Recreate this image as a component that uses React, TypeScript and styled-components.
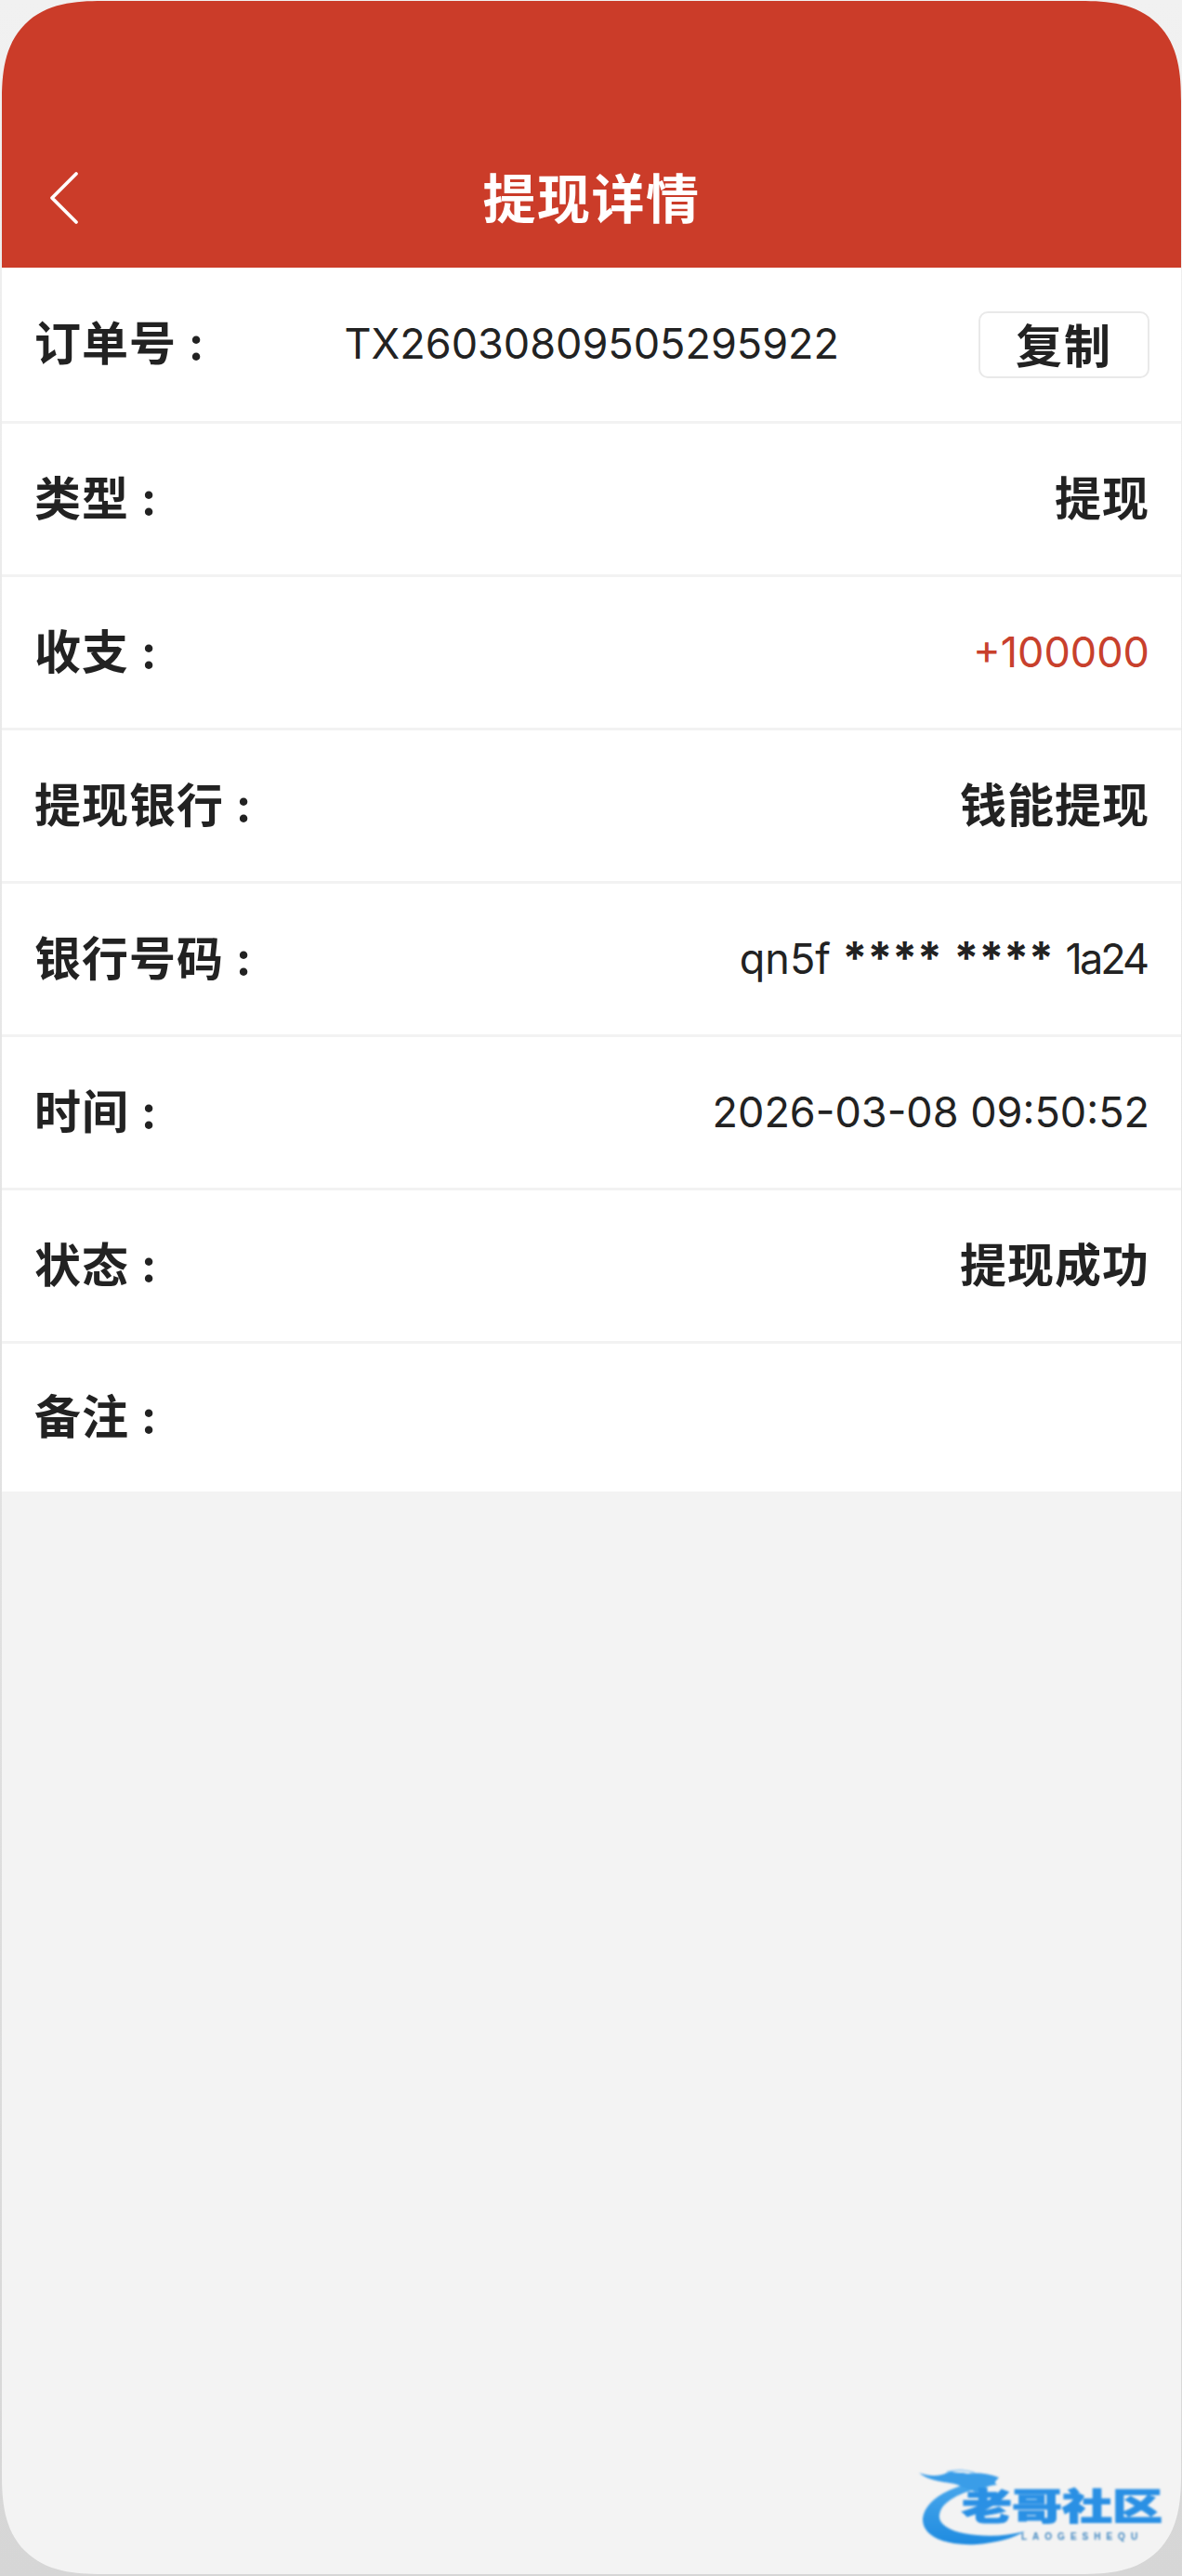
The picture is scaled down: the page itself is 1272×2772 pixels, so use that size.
import React from "react";
import styled, { createGlobalStyle } from "styled-components";

type Tone = "plain" | "strong" | "accent";
type Row = {
  label: string;
  value?: React.ReactNode;
  tone?: Tone;
};

const App = () => {
  const rows: Row[] = [
    { label: "类型", value: "提现", tone: "strong" },
    { label: "收支", value: "+100000", tone: "accent" },
    { label: "提现银行", value: "钱能提现", tone: "strong" },
    {
      label: "银行号码",
      value: (
        <>
          qn5f <Mask>****</Mask> <Mask>****</Mask> <Tail>1a24</Tail>
        </>
      ),
    },
    { label: "时间", value: "2026-03-08 09:50:52" },
    { label: "状态", value: "提现成功", tone: "strong" },
    { label: "备注" },
  ];

  return (
    <Frame>
      <GlobalStyle />
      <Screen>
        <Header>
          <BackIcon viewBox="0 0 34 58" fill="none">
            <path
              d="M30 3 L4 29 L30 55"
              stroke="#fff"
              strokeWidth="3.8"
              strokeLinecap="round"
              strokeLinejoin="round"
            />
          </BackIcon>
          <Title>提现详情</Title>
        </Header>
        <List>
          <Item>
            <Label>订单号 :</Label>
            <Value>TX26030809505295922</Value>
            <CopyButton>复制</CopyButton>
          </Item>
          {rows.map((el, i) => (
            <Item key={i}>
              <Label>{el.label} :</Label>
              {el.value && <Value $tone={el.tone}>{el.value}</Value>}
            </Item>
          ))}
        </List>
        <Logo>
          <Dragon viewBox="0 0 262 90" fill="none">
            <defs>
              <linearGradient id="swoosh" x1="0" y1="0" x2="0" y2="1">
                <stop offset="0" stopColor="#4aa8ec" />
                <stop offset="1" stopColor="#1f8be0" />
              </linearGradient>
            </defs>
            <path
              d="M66 14 C30 20 6 36 4 54 C3 74 30 84 62 82 C84 80 100 76 114 68 C96 72 80 74 62 72 C38 70 20 62 22 50 C24 36 44 26 70 20 Z"
              fill="url(#swoosh)"
            />
            <path
              d="M0 5 C14 10 26 8 34 3 C40 6 46 4 52 6 C62 4 76 6 86 10 C82 14 80 16 84 18 C74 18 70 22 62 26 C54 22 48 22 42 18 C30 14 14 16 0 5 Z"
              fill="#3a9de8"
            />
            <path d="M30 4 C40 1 52 2 60 5" stroke="#8cc6f2" strokeWidth="1.5" />
          </Dragon>
          <LogoName>老哥社区</LogoName>
          <LogoSub>LAOGESHEQU</LogoSub>
        </Logo>
      </Screen>
    </Frame>
  );
};

export default App;

const GlobalStyle = createGlobalStyle`
  html, body {
    margin: 0;
    padding: 0;
  }
  body {
    font-family: "Inter", "Noto Sans CJK SC", sans-serif;
  }
`;

const Frame = styled.div`
  width: 1272px;
  height: 2772px;
  box-sizing: border-box;
  padding: 1px 1px 2px 2px;
  background: linear-gradient(180deg, #f1f1f1 0%, #d6d6d6 100%);
`;

const Screen = styled.div`
  position: relative;
  height: 100%;
  display: flex;
  flex-direction: column;
  overflow: hidden;
  border-radius: 108px;
  corner-shape: superellipse(1.4);
  background: #f3f3f3;
`;

const Header = styled.div`
  flex: none;
  position: relative;
  height: 287px;
  box-sizing: border-box;
  padding-top: 178px;
  display: flex;
  justify-content: center;
  background: #cb3c29;
`;

const BackIcon = styled.svg`
  position: absolute;
  left: 48px;
  top: 183px;
  width: 38px;
  height: 58px;
`;

const Title = styled.div`
  font-size: 57px;
  line-height: 72px;
  font-weight: 700;
  letter-spacing: 1.5px;
  color: #fff;
`;

const List = styled.div`
  background: #fff;
  display: flex;
  flex-direction: column;
`;

const Item = styled.div`
  height: 165px;
  box-sizing: border-box;
  padding: 0 34px 9px 35px;
  display: flex;
  align-items: center;
  justify-content: space-between;
  border-bottom: 3px solid #f2f2f2;
  &:first-child {
    height: 168px;
  }
  &:last-child {
    height: 159px;
    border-bottom: none;
  }
`;

const Label = styled.div`
  font-size: 50px;
  font-weight: 700;
  letter-spacing: 1px;
  color: #222;
  white-space: pre;
`;

const Value = styled.div<{ $tone?: Tone }>`
  font-size: ${({ $tone }) => ($tone === "strong" ? "50px" : "45px")};
  font-weight: ${({ $tone }) => ($tone === "strong" ? 700 : 400)};
  letter-spacing: ${({ $tone }) => ($tone === "strong" ? "1px" : "0")};
  margin-top: ${({ $tone }) => ($tone === "strong" ? "0" : "7px")};
  color: ${({ $tone }) => ($tone === "accent" ? "#c8402c" : "#222")};
  white-space: pre;
`;

const Mask = styled.span`
  font-size: 48px;
  font-weight: 700;
  line-height: 1;
`;

const Tail = styled.span`
  letter-spacing: -3px;
  margin-right: 3px;
`;

const CopyButton = styled.div`
  width: 184px;
  height: 72px;
  margin-top: 9px;
  padding-bottom: 3px;
  box-sizing: border-box;
  display: flex;
  align-items: center;
  justify-content: center;
  border: 2px solid #e9e9e9;
  border-radius: 10px;
  font-size: 50px;
  font-weight: 700;
  letter-spacing: 2px;
  color: #222;
`;

const Logo = styled.div`
  position: absolute;
  right: 20px;
  bottom: 28px;
  width: 262px;
  height: 86px;
  filter: blur(0.8px);
`;

const Dragon = styled.svg`
  position: absolute;
  left: 0;
  top: 0;
  width: 262px;
  height: 90px;
`;

const LogoName = styled.div`
  position: absolute;
  left: 46px;
  top: 22px;
  font-size: 54px;
  line-height: 54px;
  font-weight: 900;
  white-space: nowrap;
  color: #2a90e4;
  -webkit-text-stroke: 1.5px #2a90e4;
  transform: scaleY(0.72);
  transform-origin: left top;
`;

const LogoSub = styled.div`
  position: absolute;
  left: 110px;
  top: 68px;
  font-family: "Liberation Sans", sans-serif;
  font-size: 10px;
  line-height: 12px;
  font-weight: 700;
  letter-spacing: 6px;
  color: #3f86c0;
`;
